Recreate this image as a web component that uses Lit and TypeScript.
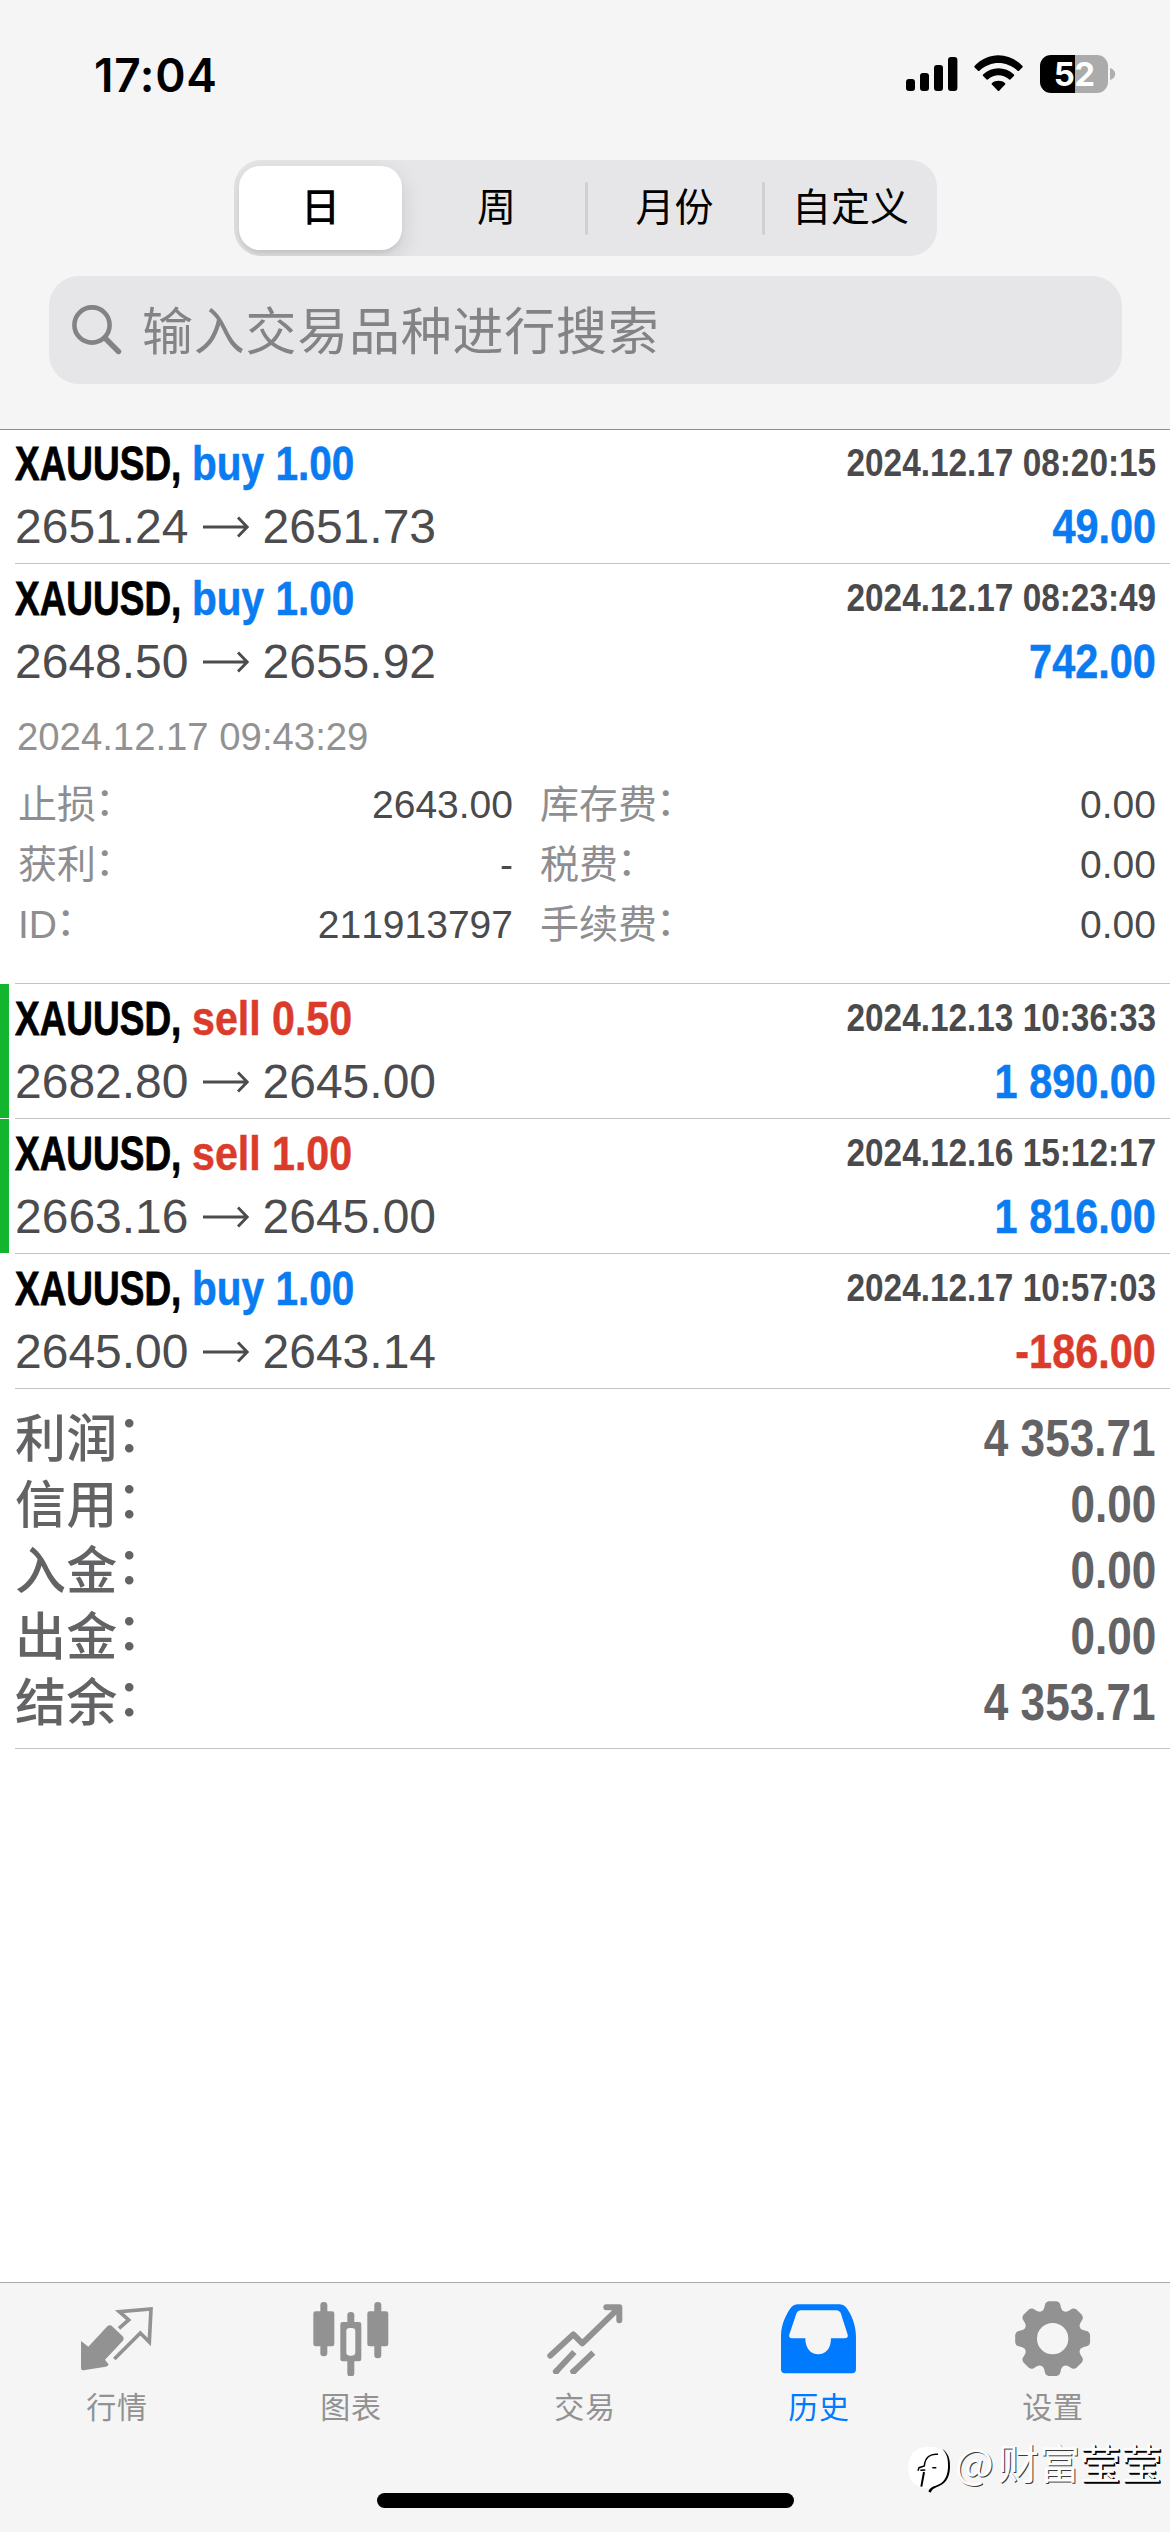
import { LitElement, html, svg, css, nothing } from "lit";
import { customElement, property } from "lit/decorators.js";
import { classMap } from "lit/directives/class-map.js";

interface Deal {
  side: "buy" | "sell";
  volume: string;
  open: string;
  close: string;
  time: string;
  profit: string;
  marked?: boolean;
  detail?: {
    time: string;
    rows: [string, string, string, string][];
  };
}

const DEALS: Deal[] = [
  { side: "buy", volume: "1.00", open: "2651.24", close: "2651.73", time: "2024.12.17 08:20:15", profit: "49.00" },
  {
    side: "buy", volume: "1.00", open: "2648.50", close: "2655.92", time: "2024.12.17 08:23:49", profit: "742.00",
    detail: {
      time: "2024.12.17 09:43:29",
      rows: [
        ["止损", "2643.00", "库存费", "0.00"],
        ["获利", "-", "税费", "0.00"],
        ["ID", "211913797", "手续费", "0.00"],
      ],
    },
  },
  { side: "sell", volume: "0.50", open: "2682.80", close: "2645.00", time: "2024.12.13 10:36:33", profit: "1 890.00", marked: true },
  { side: "sell", volume: "1.00", open: "2663.16", close: "2645.00", time: "2024.12.16 15:12:17", profit: "1 816.00", marked: true },
  { side: "buy", volume: "1.00", open: "2645.00", close: "2643.14", time: "2024.12.17 10:57:03", profit: "-186.00" },
];

const SUMMARY: [string, string][] = [
  ["利润", "4 353.71"],
  ["信用", "0.00"],
  ["入金", "0.00"],
  ["出金", "0.00"],
  ["结余", "4 353.71"],
];

/** Outline of an eight-toothed gear round (847, 238). */
function gearPath(): string {
  const cx = 847, cy = 238;
  const at = (r: number, a: number) =>
    `${(cx + r * Math.cos(a)).toFixed(1)} ${(cy + r * Math.sin(a)).toFixed(1)}`;
  let d = "";
  for (let i = 0; i < 8; i++) {
    const a = (i * Math.PI) / 4;
    d += `${i ? "L" : "M"}${at(89, a - 0.35)}Q${at(92, a - 0.29)} ${at(97, a - 0.26)}L${at(107, a - 0.21)}`;
    d += `Q${at(113, a - 0.17)} ${at(113, a - 0.1)}L${at(113, a + 0.1)}Q${at(113, a + 0.17)} ${at(107, a + 0.21)}`;
    d += `L${at(97, a + 0.26)}Q${at(92, a + 0.29)} ${at(89, a + 0.35)}`;
  }
  return `${d}Z M894 238A47 47 0 1 0 800 238A47 47 0 1 0 894 238Z`;
}

const TABS = [
  {
    label: "行情",
    icon: svg`<svg width="72" height="63.3" viewBox="240 143 216 190">
      <path fill="currentColor" d="M240 245L262 262L319 201Q327 194 335 202L365 231Q371 238 365 245L312 301L322 314Q323 320 314 322L248 333Q240 333 240 325Z"/>
      <path fill="none" stroke="currentColor" stroke-width="11" d="M354 207L383 182L355 157L450 149L445 248L418 221L340 299"/></svg>`,
  },
  {
    label: "图表",
    icon: svg`<svg width="75.3" height="74.7" viewBox="938 125 226 224" fill="currentColor">
      <rect x="939" y="153" width="63" height="105" rx="7"/><rect x="960" y="125" width="21" height="163" rx="10"/>
      <rect x="1101" y="153" width="63" height="105" rx="7"/><rect x="1122" y="125" width="21" height="169" rx="10"/>
      <rect x="1041" y="155" width="21" height="42" rx="10"/><rect x="1041" y="292" width="21" height="57" rx="10"/>
      <path fill-rule="evenodd" d="M1027 185H1076Q1083 185 1083 192V296Q1083 303 1076 303H1027Q1020 303 1020 296V192Q1020 185 1027 185ZM1048 203Q1038 203 1038 213V276Q1038 286 1048 286H1055Q1065 286 1065 276V213Q1065 203 1055 203Z"/></svg>`,
  },
  {
    label: "交易",
    icon: svg`<svg width="75.3" height="70.7" viewBox="440 131 226 212" fill="none" stroke="currentColor" stroke-width="18" stroke-linejoin="round">
      <path stroke-linecap="round" d="M450 286L519 222L546 249L655 143M618 141H657V180"/>
      <path d="M463 338L522 275M515 338L579 277"/>
      <path stroke-linecap="round" d="M467 334L470 331M519 334L522 331"/></svg>`,
  },
  {
    label: "历史",
    icon: svg`<svg width="75.3" height="69.3" viewBox="33 134.5 226 208" fill="currentColor">
      <path fill-rule="evenodd" d="M33 230C33 195 50 162 65 143Q72 135 82 135H210Q220 135 227 143C245 165 258 200 258 232V330Q258 342 246 342H45Q33 342 33 330ZM92 153Q84 153 80 161L58 226Q55 237 66 237H106C106 268 122 285 145 285C166 285 183 270 183 237H224Q236 237 233 226L212 161Q208 153 200 153Z"/></svg>`,
  },
  {
    label: "设置",
    icon: svg`<svg width="75.3" height="75.3" viewBox="734 125 226 226" fill="currentColor">
      <path fill-rule="evenodd" d="${gearPath()}"/></svg>`,
  },
];

@customElement("status-bar")
class StatusBar extends LitElement {
  static styles = css`
    :host { display: flex; justify-content: space-between; align-items: flex-start; height: 160px; padding: 0 54px 0 94px; box-sizing: border-box; color: #000; }
    .time { font: 600 46px/54px Inter, "Liberation Sans", sans-serif; margin-top: 48px; letter-spacing: 0.7px; }
    .cluster { display: flex; align-items: flex-start; margin-top: 55px; }
    .wifi { margin-left: 16px; }
    .battery { display: flex; width: 68px; height: 38px; margin-left: 17px; border-radius: 11px; align-items: center; justify-content: center;
      background: linear-gradient(to right, #000 35px, #ababab 35px); }
    .level { font: 700 33px/38px Inter, "Liberation Sans", sans-serif; color: #fff; letter-spacing: -0.6px; }
    .nub { margin: 13px 0 0 2px; }
    svg { display: block; }
  `;
  render() {
    return html`
      <div class="time">17:04</div>
      <div class="cluster">
        <svg width="52" height="38" viewBox="0 0 52 38">
          <rect x="0" y="24" width="9" height="12" rx="3"/><rect x="14" y="18" width="9" height="18" rx="3"/>
          <rect x="28" y="10" width="9" height="26" rx="3"/><rect x="42" y="2" width="9.4" height="34" rx="3"/>
        </svg>
        <svg class="wifi" width="49" height="38" viewBox="0 0 49 38">
          <path d="M0.5 11C14-3.2 35-3.2 48.5 11Q49 11.8 48.3 12.5L45 15.8Q44.3 16.4 43.5 15.7C32 5.6 17 5.6 5.5 15.7Q4.7 16.4 4 15.8L0.7 12.5Q0 11.8 0.5 11Z"/>
          <path d="M9 19.5C18 11 31 11 40 19.5Q40.6 20.3 39.9 21L36.4 24.4Q35.7 25 34.9 24.3C28.6 19 20.4 19 14.1 24.3Q13.3 25 12.6 24.4L9.1 21Q8.4 20.3 9 19.5Z"/>
          <path d="M17.8 28.2C21.8 25 27.2 25 31.2 28.2Q31.8 28.9 31.1 29.6L25.2 35.7Q24.5 36.3 23.8 35.7L17.9 29.6Q17.2 28.9 17.8 28.2Z"/>
        </svg>
        <div class="battery"><span class="level">52</span></div>
        <svg class="nub" width="6" height="12" viewBox="0 0 6 12"><path fill="#b0b0b0" d="M0 0C7 2 7 10 0 12Z"/></svg>
      </div>`;
  }
}

@customElement("period-switch")
class PeriodSwitch extends LitElement {
  static styles = css`
    :host { display: grid; grid-template-columns: 174px 177px 177px 175px; width: 703px; height: 96px; border-radius: 27px; background: #e6e6e8; overflow: hidden;
      font: 39px/96px "Liberation Sans", "Noto Sans CJK SC", sans-serif; color: #000; text-align: center; }
    .item { display: flex; align-items: center; justify-content: center; }
    .active { margin: 6px 6px 6px 5px; border-radius: 21px; background: #fff; font-weight: 500; line-height: 84px; box-shadow: 0 8px 22px rgba(0,0,0,.13), 0 3px 3px rgba(0,0,0,.05); }
    .ruled::before { content: ""; width: 3px; height: 53px; margin-right: auto; background: #d0d0d4; border-radius: 2px; }
    .ruled::after { content: ""; width: 1px; margin-left: auto; }
  `;
  render() {
    return html`<div class="item active">日</div><div class="item">周</div><div class="item ruled">月份</div><div class="item ruled">自定义</div>`;
  }
}

@customElement("symbol-search")
class SymbolSearch extends LitElement {
  static styles = css`
    :host { display: flex; align-items: center; height: 108px; margin: 20px 48px 0 49px; padding-left: 23px; border-radius: 30px; background: #e6e6e8; color: #838386; }
    .hint { margin: 5px 0 0 20px; font: 51px/103px "Liberation Sans", "Noto Sans CJK SC", sans-serif; letter-spacing: 0.75px; }
  `;
  render() {
    return html`
      <svg width="50" height="50" viewBox="0 0 50 50" fill="none" stroke="currentColor" stroke-width="4.6" stroke-linecap="round">
        <circle cx="20" cy="20" r="17.6"/><path d="M33 33L46.5 46.5" stroke-width="5.4"/>
      </svg>
      <span class="hint">输入交易品种进行搜索</span>`;
  }
}

@customElement("deal-row")
class DealRow extends LitElement {
  @property({ attribute: false }) deal!: Deal;
  static styles = css`
    :host { display: block; font-family: "Liberation Sans", "Noto Sans CJK SC", sans-serif; font-kerning: none; }
    .row { display: flex; height: 135px; box-sizing: border-box; }
    .open { height: 420px; }
    .mark { flex: none; width: 9px; height: calc(100% - 1px); margin-right: 6px; }
    .marked .mark { background: #12b52d; }
    .body { flex: 1; box-sizing: border-box; height: 100%; padding: 3px 14px 0 0; border-bottom: 1px solid #c4c4c6; }
    .line { display: flex; height: 63px; font-size: 48px; line-height: 63px; white-space: pre; }
    .symbol { width: 177px; font-weight: 700; color: #000; -webkit-text-stroke: .8px #000; }
    .symbol span, .kind span { display: inline-block; transform-origin: left; }
    .symbol span { transform: scaleX(.77); }
    .kind { font-weight: 700; -webkit-text-stroke: .5px currentColor; }
    .kind span { transform: scaleX(.845); }
    .sell .kind span { transform: scaleX(.857); }
    .time { margin-left: auto; font-weight: 700; font-size: 39px; line-height: 61px; color: #4a4a4d; transform: scaleX(.855); transform-origin: right; }
    .profit { margin-left: auto; font-weight: 700; transform: scaleX(.863); transform-origin: right; -webkit-text-stroke: .5px currentColor; }
    .blue { color: #0a7bf0; }
    .red { color: #db3b2b; }
    .price { color: #4c4c4e; }
    .arrow { margin: 20px 14px 0; }
    .closed { margin: 21px 0 0 2px; font-size: 38.3px; line-height: 46px; color: #929293; white-space: pre; }
    .facts { display: grid; grid-template-columns: 495px 1fr; column-gap: 27px; margin: 15px 0 0 3px; font-size: 39px; line-height: 60px; }
    .fact { display: flex; justify-content: space-between; height: 60px; }
    .name { color: #8e8e90; }
    .colon { display: inline-block; transform: translate(-1px, -3px); }
    .value { color: #4a4a4d; }
  `;
  render() {
    const d = this.deal;
    const tone = d.side === "buy" ? "blue" : "red";
    return html`
      <div class=${classMap({ row: true, open: !!d.detail, marked: !!d.marked, sell: d.side === "sell" })}>
        <div class="mark"></div>
        <div class="body">
          <div class="line">
            <div class="symbol"><span>XAUUSD,</span></div>
            <div class="kind ${tone}"><span>${d.side} ${d.volume}</span></div>
            <div class="time">${d.time}</div>
          </div>
          <div class="line">
            <span class="price">${d.open}</span>
            <svg class="arrow" width="46" height="24" viewBox="0 0 46 24" fill="none" stroke="#4c4c4e" stroke-width="2.9"><path d="M0 12H44M35 2.6L44.2 12L35 21.4"/></svg>
            <span class="price">${d.close}</span>
            <span class="profit ${d.profit.startsWith("-") ? "red" : "blue"}">${d.profit}</span>
          </div>
          ${d.detail
            ? html`<div class="closed">${d.detail.time}</div>
                <div class="facts">
                  ${d.detail.rows.map(([a, b, c, e]) => html`
                    <div class="fact"><span class="name">${a}<span class="colon">：</span></span><span class="value">${b}</span></div>
                    <div class="fact"><span class="name">${c}<span class="colon">：</span></span><span class="value">${e}</span></div>`)}
                </div>`
            : nothing}
        </div>
      </div>`;
  }
}

@customElement("totals-block")
class TotalsBlock extends LitElement {
  static styles = css`
    :host { display: block; box-sizing: border-box; height: 360px; margin-left: 15px; padding: 17px 14px 0 0; border-bottom: 1px solid #c4c4c6;
      font-family: "Liberation Sans", "Noto Sans CJK SC", sans-serif; font-size: 51px; line-height: 66px; color: #636365; font-kerning: none; }
    .row { display: flex; justify-content: space-between; height: 66px; }
    .name { font-weight: 500; padding-top: 1px; line-height: 66px; letter-spacing: .3px; }
    .colon { display: inline-block; transform: translate(-1px, -5px); }
    .value { font-weight: 700; transform: scaleX(.865); transform-origin: right; }
  `;
  render() {
    return SUMMARY.map(([k, v]) => html`<div class="row"><span class="name">${k}<span class="colon">：</span></span><span class="value">${v}</span></div>`);
  }
}

@customElement("tab-bar")
class TabBar extends LitElement {
  static styles = css`
    :host { display: flex; flex-direction: column; align-items: center; box-sizing: border-box; height: 250px; border-top: 1px solid #a9a9ab; background: #f5f5f5; }
    .tabs { display: grid; grid-template-columns: repeat(5, 1fr); width: 100%; height: 210px; padding-top: 18px; box-sizing: border-box; color: #929292; }
    .tab { display: flex; flex-direction: column; align-items: center; gap: 11px; }
    .glyph { display: flex; align-items: center; justify-content: center; height: 76px; }
    .label { font: 30px/40px "Liberation Sans", "Noto Sans CJK SC", sans-serif; letter-spacing: .7px; }
    .current { color: #007aff; }
    .home { width: 417px; height: 15px; border-radius: 8px; background: #000; }
  `;
  render() {
    return html`
      <div class="tabs">
        ${TABS.map((t) => html`<div class=${classMap({ tab: true, current: t.label === "历史" })}>
          <div class="glyph">${t.icon}</div><div class="label">${t.label}</div></div>`)}
      </div>
      <div class="home"></div>`;
  }
}

@customElement("app-root")
class AppRoot extends LitElement {
  static styles = css`
    :host { display: flex; flex-direction: column; position: relative; width: 1170px; height: 2532px; background: #fff; overflow: hidden; }
    .header { position: relative; z-index: 1; box-sizing: border-box; height: 430px; background: #f5f5f5; border-bottom: 1px solid #8f8f92; }
    .switch { margin: 0 auto 0 234px; }
    .list { flex: 1; margin-top: -1px; }
    .credit { position: absolute; left: 907px; top: 2436px; display: flex; align-items: flex-start; gap: 4px; height: 60px; color: #fdfdfd;
      font: 41px/50px "Noto Sans CJK SC", sans-serif; text-shadow: 1px 1px 0 #3c3c3c; white-space: nowrap; }
    .logo { margin-top: 10px; }
    .at { display: inline-block; width: 43px; }
    .deep { text-shadow: 1px 1px 0 #000, 1.5px 1.5px 0 #000; }
  `;
  render() {
    return html`
      <div class="header">
        <status-bar></status-bar>
        <period-switch class="switch"></period-switch>
        <symbol-search></symbol-search>
      </div>
      <div class="list">
        ${DEALS.map((d) => html`<deal-row .deal=${d}></deal-row>`)}
        <totals-block></totals-block>
      </div>
      <tab-bar></tab-bar>
      <div class="credit">
        <svg class="logo" width="44" height="48" viewBox="22 48 132 144" fill="none" stroke="#000">
          <rect x="26" y="51" width="122" height="124" rx="54" fill="#fff" stroke="none"/>
          <path fill="#000" stroke="none" d="M128 56C146 70 152 86 151 112C150 146 136 164 110 172Q98 176 92 188L86 184Q92 170 108 167C132 160 144 142 145 112C146 86 142 72 128 56Z"/>
          <path stroke-width="4.5" d="M115 73C92 70 76 82 74 108L58 113L55 122M62 121L77 120M98 113H110"/>
          <path stroke-width="6" d="M73 126L65 170"/>
        </svg>
        <span><span class="at">@</span>财富<span class="deep">莹莹</span></span>
      </div>`;
  }
}
